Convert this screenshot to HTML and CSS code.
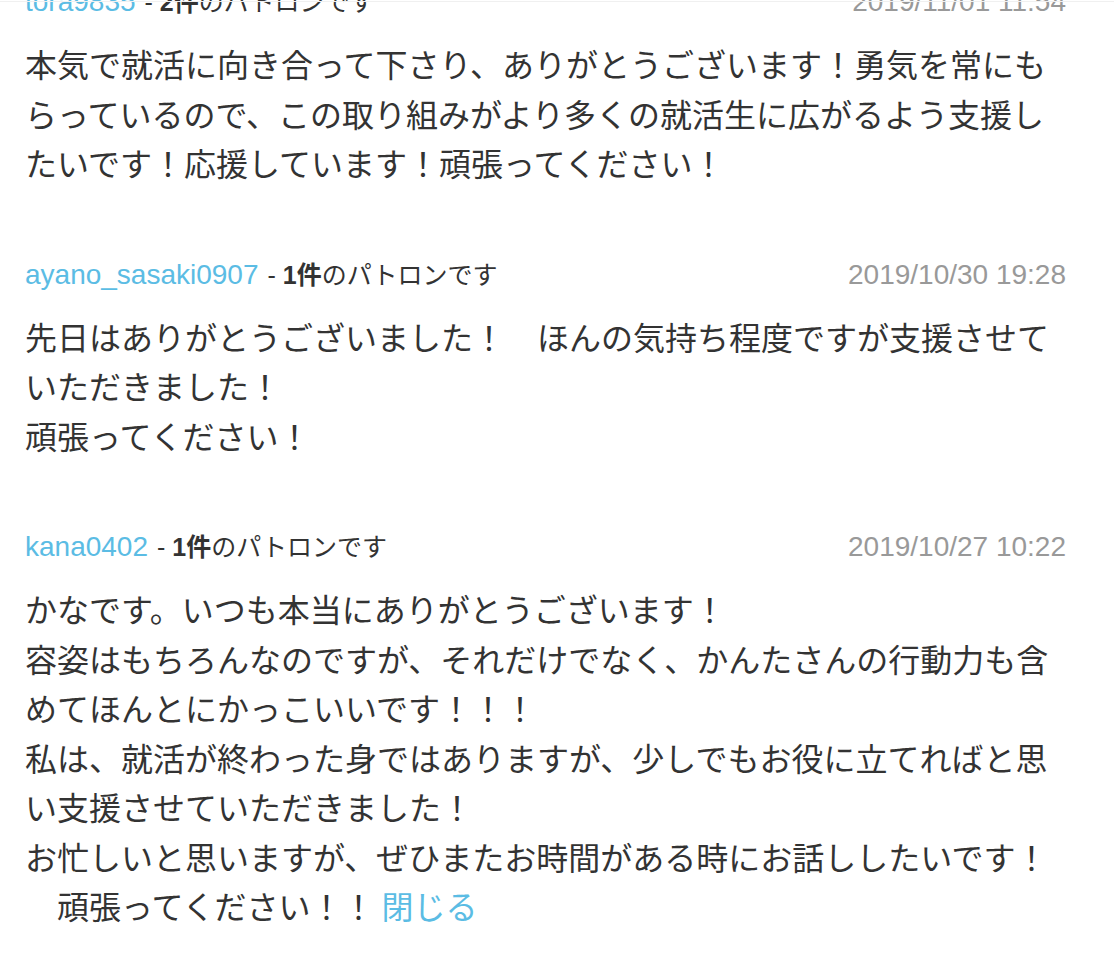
FILE: index.html
```html
<!DOCTYPE html>
<html lang="ja">
<head>
<meta charset="utf-8">
<title>コメント</title>
<link rel="stylesheet" href="styles.css">
</head>
<body>
<div class="topline"></div>
<div class="comments">
  <div class="comment">
    <div class="meta">
      <div class="who"><a class="user" href="#">tora9835</a><span class="patron"> - <b>2件</b>のパトロンです</span></div>
      <div class="date">2019/11/01 11:54</div>
    </div>
    <p class="body">本気で就活に向き合って下さり、ありがとうございます！勇気を常にもらっているので、この取り組みがより多くの就活生に広がるよう支援したいです！応援しています！頑張ってください！</p>
  </div>
  <div class="comment">
    <div class="meta">
      <div class="who"><a class="user" href="#">ayano_sasaki0907</a><span class="patron"> - <b>1件</b>のパトロンです</span></div>
      <div class="date">2019/10/30 19:28</div>
    </div>
    <p class="body">先日はありがとうございました！　ほんの気持ち程度ですが支援させていただきました！<br>頑張ってください！</p>
  </div>
  <div class="comment">
    <div class="meta">
      <div class="who"><a class="user" href="#">kana0402</a><span class="patron"> - <b>1件</b>のパトロンです</span></div>
      <div class="date">2019/10/27 10:22</div>
    </div>
    <p class="body">かなです。いつも本当にありがとうございます！<br>容姿はもちろんなのですが、それだけでなく、かんたさんの行動力も含めてほんとにかっこいいです！！！<br>私は、就活が終わった身ではありますが、少しでもお役に立てればと思い支援させていただきました！<br>お忙しいと思いますが、ぜひまたお時間がある時にお話ししたいです！<br>　頑張ってください！！ <a class="close" href="#">閉じる</a></p>
  </div>
</div>
</body>
</html>
```
FILE: styles.css
```css
html, body {
  margin: 0;
  padding: 0;
  background: #ffffff;
}
body {
  font-family: "Liberation Sans", "Noto Sans CJK JP", sans-serif;
  color: #333333;
  overflow: hidden;
}
.topline {
  position: fixed;
  top: 1px;
  left: 0;
  right: 0;
  height: 1px;
  background: #f0f0f0;
}
.comments {
  margin-top: -18px;
  padding: 0 48px 0 25px;
  display: flex;
  flex-direction: column;
  gap: 67px;
}
.meta {
  display: flex;
  justify-content: space-between;
  align-items: baseline;
  line-height: 40px;
  height: 40px;
}
.user {
  font-size: 28px;
  color: #5bbce4;
  text-decoration: none;
}
.patron {
  font-size: 25px;
  color: #333333;
  margin-left: 2px;
}
.patron b {
  font-weight: bold;
}
.date {
  font-size: 28px;
  color: #999999;
}
.body {
  margin: 17px 0 0 0;
  font-size: 32px;
  line-height: 49.5px;
  color: #333333;
  font-family: "Noto Sans CJK JP", sans-serif;
}
.close {
  color: #5bbce4;
  text-decoration: none;
}
```
